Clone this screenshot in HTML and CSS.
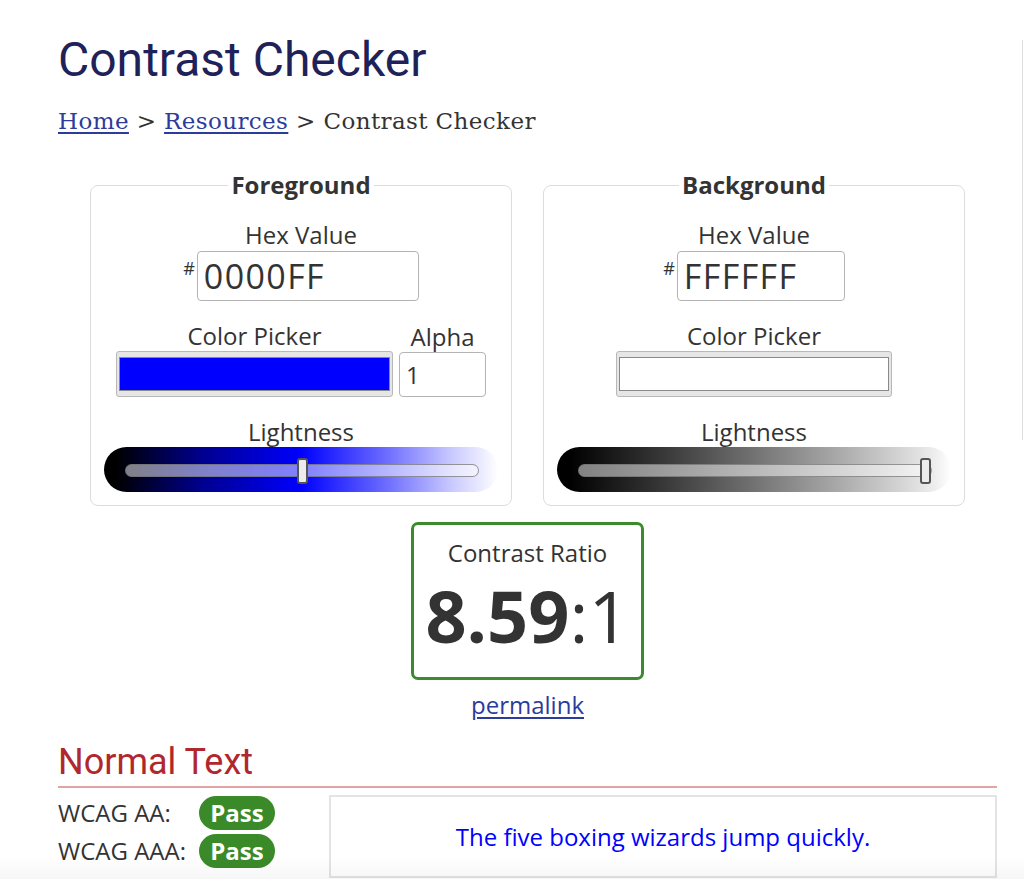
FILE: index.html
```html
<!DOCTYPE html>
<html lang="en">
<head>
<meta charset="utf-8">
<title>Contrast Checker</title>
<link rel="stylesheet" href="styles.css">
</head>
<body>
<div class="page">
  <main class="main">
    <h1 class="title">Contrast Checker</h1>
    <nav class="crumbs"><a href="#">Home</a> &gt; <a href="#">Resources</a> &gt; Contrast Checker</nav>

    <div class="panels">
      <fieldset class="panel">
        <legend>Foreground</legend>
        <div class="label">Hex Value</div>
        <div class="hex-row">
          <span class="hash">#</span>
          <div class="hex-input fg-hex">0000FF</div>
        </div>
        <div class="picker-row">
          <div class="picker-group">
            <div class="label">Color Picker</div>
            <div class="picker fg-picker"><div class="swatch swatch-blue"></div></div>
          </div>
          <div class="alpha-group">
            <div class="label">Alpha</div>
            <div class="alpha-input">1</div>
          </div>
        </div>
        <div class="label">Lightness</div>
        <div class="slider slider-blue">
          <div class="track">
            <div class="thumb" style="left: calc(0.5 * (100% - 11px))"></div>
          </div>
        </div>
      </fieldset>

      <fieldset class="panel">
        <legend>Background</legend>
        <div class="label">Hex Value</div>
        <div class="hex-row">
          <span class="hash">#</span>
          <div class="hex-input bg-hex">FFFFFF</div>
        </div>
        <div class="picker-row">
          <div class="picker-group">
            <div class="label">Color Picker</div>
            <div class="picker bg-picker"><div class="swatch swatch-white"></div></div>
          </div>
        </div>
        <div class="label">Lightness</div>
        <div class="slider slider-gray">
          <div class="track">
            <div class="thumb" style="left: calc(1 * (100% - 11px))"></div>
          </div>
        </div>
      </fieldset>
    </div>

    <div class="ratio-wrap">
      <div class="ratio-box">
        <div class="ratio-label">Contrast Ratio</div>
        <div class="ratio-value"><b>8.59</b>:1</div>
      </div>
      <a class="permalink" href="#">permalink</a>
    </div>

    <section class="result">
      <h2 class="result-title">Normal Text</h2>
      <div class="result-body">
        <div class="checks">
          <div class="check"><span class="check-label">WCAG AA:</span><span class="pill">Pass</span></div>
          <div class="check"><span class="check-label">WCAG AAA:</span><span class="pill">Pass</span></div>
        </div>
        <div class="sample">The five boxing wizards jump quickly.</div>
      </div>
    </section>
  </main>
  <aside class="side"></aside>
</div>
<div class="bottom-fade"></div>
</body>
</html>
```
FILE: styles.css
```css
html, body {
  margin: 0;
  padding: 0;
  background: #fff;
}
body {
  font-family: "Open Sans", "DejaVu Sans", sans-serif;
  color: #333;
  overflow: hidden;
}
.page {
  display: flex;
  align-items: flex-start;
}
.main {
  width: 939px;
  padding: 0 25px 0 58px;
  flex: none;
}
.side {
  margin-top: 40px;
  height: 400px;
  width: 1px;
  border-left: 1px solid #dedede;
}
.title {
  font-family: Roboto, "Liberation Sans", sans-serif;
  font-weight: 400;
  font-size: 48px;
  line-height: 56px;
  color: #1e2259;
  margin: 32px 0 0;
}
.crumbs {
  font-family: "DejaVu Serif", "Liberation Serif", serif;
  font-size: 23px;
  letter-spacing: 0.4px;
  line-height: 28px;
  margin-top: 19px;
  color: #333;
}
.crumbs a {
  color: #2d3b9b;
  text-decoration: underline;
  text-underline-offset: 3px;
}
.panels {
  display: flex;
  justify-content: center;
  gap: 31px;
  margin-top: 36px;
}
.panel {
  box-sizing: border-box;
  width: 422px;
  margin: 0;
  padding: 21px 12px 13px;
  border: 1px solid #dcdcdc;
  border-radius: 8px;
  display: flex;
  flex-direction: column;
  align-items: center;
  min-width: 0;
}
.panel legend {
  margin: 0 auto;
  padding: 0 3px;
  font-weight: 700;
  font-size: 24px;
  line-height: 28px;
  color: #333;
}
.label {
  font-size: 24px;
  line-height: 30px;
  text-align: center;
  color: #333;
}
.hex-row {
  display: flex;
  align-items: flex-start;
  gap: 2px;
  height: 50px;
  margin-top: 1px;
  margin-bottom: 20px;
}
.hash {
  font-size: 18px;
  line-height: 24px;
  margin-top: 5px;
}
.hex-input {
  box-sizing: border-box;
  height: 50px;
  border: 1px solid #b4b4b4;
  border-radius: 4px;
  padding: 0 6px;
  font-size: 34px;
  letter-spacing: 1.4px;
  line-height: 48px;
  color: #333;
}
.fg-hex { width: 222px; }
.bg-hex { width: 168px; }
.picker-row {
  display: flex;
  gap: 6px;
  align-items: flex-end;
  margin-bottom: 20px;
}
.picker-group, .alpha-group {
  display: flex;
  flex-direction: column;
  align-items: center;
}
.picker {
  box-sizing: border-box;
  height: 46px;
  padding: 5px 2px;
  background: #e6e6e6;
  border: 1px solid #b8b8b8;
  border-radius: 3px;
}
.fg-picker { width: 277px; }
.bg-picker { width: 276px; }
.swatch {
  box-sizing: border-box;
  height: 100%;
  border: 1px solid #8a8a8a;
}
.swatch-blue { background: #0000ff; }
.swatch-white { background: #fff; }
.alpha-input {
  box-sizing: border-box;
  width: 87px;
  height: 45px;
  border: 1px solid #b4b4b4;
  border-radius: 4px;
  padding: 0 6px;
  font-size: 24px;
  line-height: 43px;
  color: #333;
}
.slider {
  box-sizing: border-box;
  width: 394px;
  height: 45px;
  border-radius: 23px;
  padding: 17px 19px 0 21px;
}
.slider-blue {
  background: linear-gradient(to right, #000 0%, #000 3%, #000090 25%, #0000ff 50%, #6e6eff 72%, #c8c8ff 88%, #ececff 96%, #fff 100%);
}
.slider-gray {
  background: linear-gradient(to right, #000 0%, #000 3%, #333 25%, #727272 50%, #ababab 72%, #d6d6d6 88%, #eeeeee 96%, #fff 100%);
}
.track {
  position: relative;
  height: 13px;
  box-sizing: border-box;
  background: rgba(255, 255, 255, 0.5);
  border: 1px solid rgba(110, 110, 110, 0.7);
  border-radius: 7px;
}
.thumb {
  position: absolute;
  top: -7px;
  width: 11px;
  height: 26px;
  box-sizing: border-box;
  background: #ececec;
  border: 2px solid #555;
  border-radius: 3px;
}
.ratio-wrap {
  display: flex;
  flex-direction: column;
  align-items: center;
  margin-top: 16px;
}
.ratio-box {
  box-sizing: border-box;
  width: 233px;
  height: 158px;
  border: 3px solid #3c8a2e;
  border-radius: 7px;
  padding-top: 13px;
  text-align: center;
}
.ratio-label {
  font-size: 24px;
  line-height: 30px;
  color: #333;
}
.ratio-value {
  margin-top: 7px;
  font-size: 72px;
  line-height: 80px;
  color: #333;
}
.ratio-value b {
  font-weight: 700;
}
.permalink {
  margin-top: 10px;
  font-size: 24px;
  line-height: 30px;
  color: #2d3b9b;
  text-decoration: underline;
  text-underline-offset: 3px;
}
.result {
  margin-top: 22px;
}
.result-title {
  font-family: Roboto, "Liberation Sans", sans-serif;
  font-weight: 400;
  font-size: 36px;
  line-height: 40px;
  color: #b0282d;
  margin: 0;
  padding-bottom: 4px;
  border-bottom: 2px solid #e2a3a5;
}
.result-body {
  display: flex;
  gap: 54px;
  margin-top: 7px;
}
.checks {
  display: flex;
  flex-direction: column;
  gap: 4px;
  padding-top: 1px;
}
.check {
  display: flex;
  align-items: center;
  height: 34px;
}
.check-label {
  width: 141px;
  font-size: 24px;
  line-height: 30px;
  color: #333;
}
.pill {
  width: 76px;
  height: 34px;
  border-radius: 17px;
  background: #3a8a2a;
  color: #fff;
  font-weight: 700;
  font-size: 24px;
  line-height: 34px;
  text-align: center;
}
.sample {
  box-sizing: border-box;
  flex: 1;
  height: 83px;
  border: 2px solid #e4e4e4;
  display: flex;
  align-items: center;
  justify-content: center;
  font-size: 24px;
  color: #0000ff;
}
.bottom-fade {
  position: fixed;
  left: 0;
  right: 0;
  bottom: 0;
  height: 22px;
  background: linear-gradient(to bottom, rgba(0, 0, 0, 0), rgba(0, 0, 0, 0.035));
  pointer-events: none;
}
```
